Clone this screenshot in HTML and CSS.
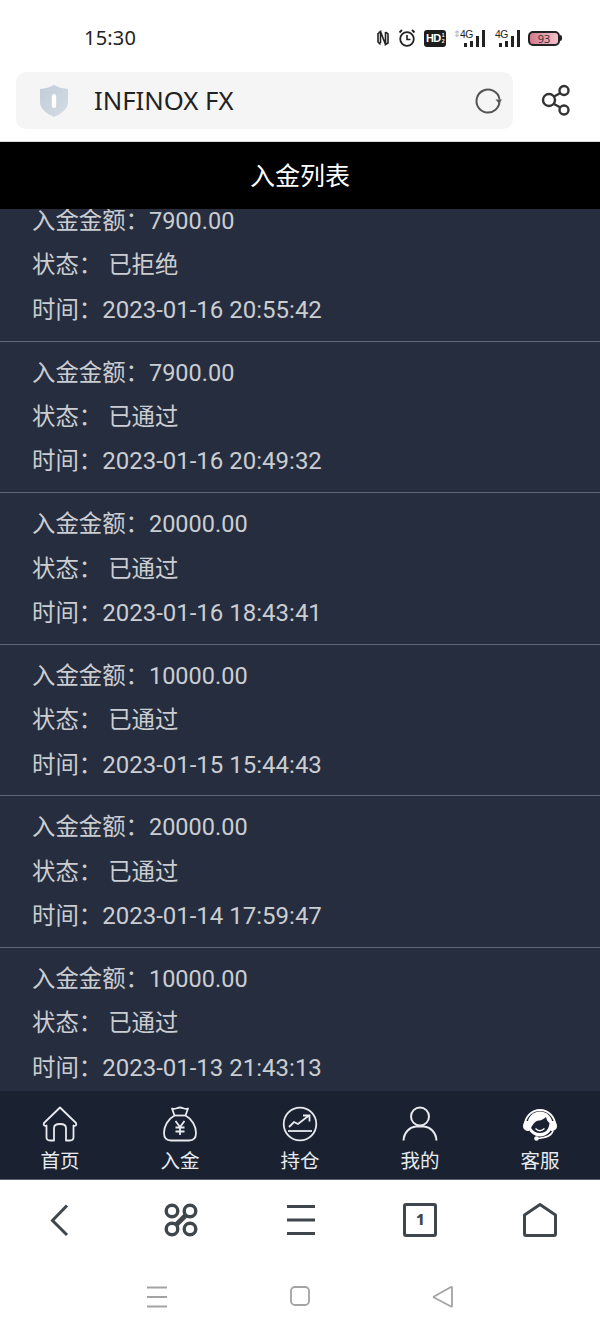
FILE: index.html
```html
<!DOCTYPE html>
<html lang="zh-CN">
<head>
<meta charset="utf-8">
<title>入金列表</title>
<link rel="stylesheet" href="styles.css">
</head>
<body>
<div class="app">
  <div class="status">
    <span class="clock">15:30</span>
    <div class="status-icons">
      <svg width="14" height="18" viewBox="0 0 14 18"><path d="M2.500 4 L4.500 2.500 V14 M2 4 V13 L4.500 15.500 M4.500 2.500 L9.500 15.500 M9.500 3 L12 5 V14 L9.500 15.500 V3" fill="none" stroke="#222" stroke-width="1.600"/></svg>
      <svg width="18" height="20" viewBox="0 0 18 20"><circle cx="9" cy="11" r="6.800" fill="none" stroke="#222" stroke-width="1.800"/><path d="M9 7v4.500h3.500" fill="none" stroke="#222" stroke-width="1.600"/><path d="M1.500 4.500 4 2M14 2l2.500 2.500" stroke="#222" stroke-width="1.800" fill="none"/></svg>
      <span class="hd">HD<small>1<br>2</small></span>
      <span class="sig sig-a"><i class="arrows">⇕</i><b>4G</b><span class="bars"><u class="b1"></u><u class="b2"></u><u class="b3"></u><u class="b4"></u></span></span>
      <span class="sig"><b>4G</b><span class="bars"><u class="b1"></u><u class="b2"></u><u class="b3"></u><u class="b4"></u></span></span>
      <span class="battery"><span class="batt-body">93</span><span class="batt-tip"></span></span>
    </div>
  </div>

  <div class="browser-bar">
    <div class="address">
      <svg class="shield" width="30" height="34" viewBox="0 0 30 34"><defs><linearGradient id="sh" x1="0" y1="0" x2="1" y2="1"><stop offset="0" stop-color="#c0ccd8"/><stop offset="1" stop-color="#d5dde4"/></linearGradient></defs><path d="M15 1 C19 3.500 24 4.500 29 5 V18 C29 25 22 30 15 33 C8 30 1 25 1 18 V5 C6 4.500 11 3.500 15 1Z" fill="url(#sh)"/><rect x="12.800" y="10" width="4.400" height="14" rx="2.200" fill="#fff"/></svg>
      <span class="url">INFINOX FX</span>
      <svg class="reload" width="28" height="28" viewBox="0 0 28 28"><path d="M25.500 14 A11.500 11.500 0 1 1 19 3.700 C22.500 5.300 25 8.500 25.500 12.500" fill="none" stroke="#555" stroke-width="2"/><path d="M21.500 12.500 H28 L25 16.500Z" fill="#555"/></svg>
    </div>
    <svg class="share" width="30" height="32" viewBox="0 0 30 32"><circle cx="8" cy="16" r="6" fill="none" stroke="#333" stroke-width="2.400"/><circle cx="23" cy="6.500" r="4.500" fill="none" stroke="#333" stroke-width="2.400"/><circle cx="23" cy="26" r="4.500" fill="none" stroke="#333" stroke-width="2.400"/><path d="M13 12.500 19.500 9M13 20 19.500 23.500" stroke="#333" stroke-width="2.400" fill="none"/></svg>
  </div>

  <header class="title">入金列表</header>

  <main class="list">
    <section class="item first"><p>入金金额：<b>7900.00</b></p><p>状态：<span class="st">已拒绝</span></p><p>时间：<b>2023-01-16 20:55:42</b></p></section>
    <section class="item"><p>入金金额：<b>7900.00</b></p><p>状态：<span class="st">已通过</span></p><p>时间：<b>2023-01-16 20:49:32</b></p></section>
    <section class="item"><p>入金金额：<b>20000.00</b></p><p>状态：<span class="st">已通过</span></p><p>时间：<b>2023-01-16 18:43:41</b></p></section>
    <section class="item"><p>入金金额：<b>10000.00</b></p><p>状态：<span class="st">已通过</span></p><p>时间：<b>2023-01-15 15:44:43</b></p></section>
    <section class="item"><p>入金金额：<b>20000.00</b></p><p>状态：<span class="st">已通过</span></p><p>时间：<b>2023-01-14 17:59:47</b></p></section>
    <section class="item"><p>入金金额：<b>10000.00</b></p><p>状态：<span class="st">已通过</span></p><p>时间：<b>2023-01-13 21:43:13</b></p></section>
  </main>

  <nav class="tabs">
    <a class="tab">
      <svg width="36" height="36" viewBox="0 0 36 36"><path d="M18 1.500 L34 17 C35 19 33.500 20.500 31.500 19.500 V31 C31.500 33.500 30.500 34.500 28 34.500 H24 V22 C24 19.500 22.500 18 18 18 C13.500 18 12 19.500 12 22 V34.500 H8 C5.500 34.500 4.500 33.500 4.500 31 V19.500 C2.500 20.500 1 19 2 17Z" fill="none" stroke="#e8eaee" stroke-width="1.800" stroke-linejoin="round"/></svg>
      <span>首页</span>
    </a>
    <a class="tab">
      <svg width="36" height="36" viewBox="0 0 36 36"><path d="M10 2.500 C13 4 15 1.500 18 1.500 C21 1.500 23 4 26 2.500 L23.500 9.500 C30 13 34 20 34 27 C34 32 31.500 34.500 27 34.500 H9 C4.500 34.500 2 32 2 27 C2 20 6 13 12.500 9.500Z" fill="none" stroke="#e8eaee" stroke-width="1.800" stroke-linejoin="round"/><path d="M12.500 9.500 H23.500" stroke="#e8eaee" stroke-width="1.800"/><path d="M13.500 15 18 21 22.500 15M18 21V29M13.500 21.500H22.500M13.500 25.500H22.500" fill="none" stroke="#e8eaee" stroke-width="1.800"/></svg>
      <span>入金</span>
    </a>
    <a class="tab">
      <svg width="36" height="36" viewBox="0 0 36 36"><circle cx="18" cy="18" r="16.300" fill="none" stroke="#e8eaee" stroke-width="1.800"/><path d="M6 25 H30" stroke="#e8eaee" stroke-width="1.800"/><path d="M7 21 12 16 16 18 27 9.500M21 9.500H27.500V15.500" fill="none" stroke="#e8eaee" stroke-width="1.800"/></svg>
      <span>持仓</span>
    </a>
    <a class="tab">
      <svg width="36" height="36" viewBox="0 0 36 36"><circle cx="18" cy="10.500" r="9" fill="none" stroke="#e8eaee" stroke-width="2"/><path d="M1.500 34.500 C2 26 8 21 14 20.500 H22 C28 21 34 26 34.500 34.500" fill="none" stroke="#e8eaee" stroke-width="2"/></svg>
      <span>我的</span>
    </a>
    <a class="tab">
      <svg width="36" height="36" viewBox="0 0 36 36"><path d="M3 19 A15 15 0 0 1 33 19" fill="none" stroke="#fff" stroke-width="2"/><circle cx="18" cy="18" r="12.500" fill="#fff"/><path d="M3 15 H7 V25 H5 C2 24 1 22 1 20 C1 18 2 16 3 15Z" fill="#fff"/><path d="M33 15 H29 V25 H31 C34 24 35 22 35 20 C35 18 34 16 33 15Z" fill="#fff"/><path d="M9 22 C11 18 13 15 17 14.500 C20 14.500 22 12.500 24 11 C24.500 14 26 16 27.500 17 C27 23 24 27 18 27 C14 27 11 25 9 22Z" fill="#1a2232"/><path d="M13.500 22.500 q4 4.500 9 0" stroke="#fff" stroke-width="1.300" fill="none"/><path d="M31 25 C29.500 30 24 31.500 16 32.500" fill="none" stroke="#fff" stroke-width="1.500"/><circle cx="14.500" cy="32.500" r="2.300" fill="#fff"/></svg>
      <span>客服</span>
    </a>
  </nav>

  <div class="browser-nav">
    <svg width="36" height="36" viewBox="0 0 36 36"><path d="M25 3.500 10.500 18.500 25 33" fill="none" stroke="#3f474d" stroke-width="3"/></svg>
    <svg width="36" height="36" viewBox="0 0 36 36"><g fill="none" stroke="#3f474d" stroke-width="3.400"><circle cx="9" cy="9" r="5.800"/><circle cx="27" cy="9" r="5.800"/><circle cx="9" cy="27" r="5.800"/><circle cx="27" cy="27" r="5.800"/><path d="M22.500 13.500 13.500 22.500" stroke-width="5"/></g></svg>
    <svg width="36" height="36" viewBox="0 0 36 36"><path d="M4 4.500H32M4 18H32M4 31.500H32" stroke="#3f474d" stroke-width="3"/></svg>
    <span class="tabcount">1</span>
    <svg width="36" height="36" viewBox="0 0 36 36"><path d="M18 2.500 33.500 13V32C33.500 33 33 33.500 32 33.500H4C3 33.500 2.500 33 2.500 32V13Z" fill="none" stroke="#3f474d" stroke-width="3" stroke-linejoin="round"/></svg>
  </div>

  <div class="gesture">
    <svg width="22" height="22" viewBox="0 0 22 22"><path d="M1 1.500H21M1 11H21M1 20.500H21" stroke="#a3a3a3" stroke-width="1.800"/></svg>
    <svg width="20" height="20" viewBox="0 0 20 20"><rect x="1" y="1" width="18" height="18" rx="4" fill="none" stroke="#a3a3a3" stroke-width="1.800"/></svg>
    <svg width="22" height="22" viewBox="0 0 22 22"><path d="M20 1.500 V20 C20 20.500 19.500 20.800 19 20.500 L2 11.500 C1.500 11.200 1.500 10.800 2 10.500 L19 1 C19.500 .8 20 1 20 1.500Z" fill="none" stroke="#a3a3a3" stroke-width="1.800"/></svg>
  </div>
</div>
</body>
</html>
```

FILE: styles.css
```css
* { box-sizing: border-box; }
html, body { margin: 0; padding: 0; }
body { background: #fff; font-family: Roboto, "Noto Sans CJK SC", sans-serif; }
.app { width: 600px; height: 1333px; display: flex; flex-direction: column; overflow: hidden; }

.status { height: 72px; display: flex; align-items: flex-start; justify-content: space-between; padding: 24px 38px 0 84px; flex: none; }
.clock { font-family: "Noto Sans", sans-serif; font-size: 20px; line-height: 28px; color: #222; font-weight: 400; letter-spacing: .2px; }
.status-icons { display: flex; align-items: center; gap: 8px; height: 28px; }
.hd { background: #1d1d1d; color: #fff; border-radius: 3px; width: 22px; height: 17px; display: flex; align-items: center; justify-content: center; font: 700 11px/1 "Liberation Sans", sans-serif; letter-spacing: -.5px; }
.hd small { font-size: 5px; line-height: 6px; margin-left: 1px; }
.sig { position: relative; display: flex; width: 25px; height: 17px; align-items: flex-end; justify-content: flex-end; margin-left: 2px; }
.sig-a { width: 31px; margin-left: 0; }
.sig b { position: absolute; left: 0; top: -1px; font: 400 11.500px/11px "Liberation Sans", sans-serif; color: #222; letter-spacing: -.5px; transform: scaleX(.9); transform-origin: left; }
.sig-a b { left: 6px; }
.arrows { position: absolute; left: -1px; top: -2px; font: normal 9px/13px "DejaVu Sans", sans-serif; color: #aaa; }
.bars { display: flex; align-items: flex-end; gap: 3px; }
.bars u { display: block; width: 3px; background: #222; }
.b1 { height: 4px; }
.b2 { height: 6px; }
.b3 { height: 11px; }
.b4 { height: 17px; }
.battery { display: flex; align-items: center; }
.batt-body { width: 32px; height: 15px; border: 2px solid #222; border-radius: 5px; background: linear-gradient(90deg, #d07a8c, #f1c2ca); color: #4a2a30; font: 400 11px/11px "Noto Sans", sans-serif; text-align: center; }
.batt-tip { width: 2px; height: 6px; background: #222; border-radius: 0 2px 2px 0; }

.browser-bar { height: 70px; flex: none; display: flex; padding: 0 15px 0 16px; gap: 28px; border-bottom: 1px solid #d8d8d8; }
.address { width: 497px; height: 57px; background: #f5f5f5; border-radius: 10px; display: flex; align-items: center; padding: 0 10px 0 23px; }
.shield { flex: none; }
.url { flex: 1; margin-left: 25px; font-family: "Noto Sans", sans-serif; font-size: 25.700px; color: #222; }
.reload { flex: none; margin-right: 1px; }
.share { flex: none; margin-top: 12px; }

.title { height: 67px; flex: none; background: #000; color: #fff; font-size: 25px; line-height: 64px; text-align: center; font-family: "Noto Sans CJK SC", sans-serif; font-weight: 400; }

.list { height: 882px; flex: none; background: #252d3f; overflow: hidden; }
.item { height: 151.600px; padding: 9px 0 0 32px; border-bottom: 1px solid #626875; color: #cbcdd1; font-size: 23.400px; }
.item.first { margin-top: -19px; }
.item p { margin: 0; height: 44.400px; line-height: 44.400px; white-space: nowrap; }
.item b { font-size: 24px; font-weight: 400; }
.item p:first-child b { font-size: 23.500px; }
.st { margin-left: 6px; }

.tabs { height: 89px; flex: none; background: #1a2232; border-bottom: 1px solid #5b6070; display: flex; padding-top: 15px; }
.tab { flex: 1; display: flex; flex-direction: column; align-items: center; color: #e8eaee; font-size: 19.500px; line-height: 28px; gap: 6px; }
.tab svg { display: block; flex: none; }

.browser-nav { height: 80px; flex: none; display: flex; align-items: flex-start; justify-content: space-around; padding-top: 22px; }
.tabcount { width: 34px; height: 34px; margin-top: 1px; border: 3.500px solid #3f474d; border-radius: 3px; font: 800 15px/27px "Noto Sans", sans-serif; color: #3f474d; text-align: center; }

.gesture { flex: 1; display: flex; align-items: flex-start; justify-content: center; gap: 122px; padding-top: 26px; }
```
